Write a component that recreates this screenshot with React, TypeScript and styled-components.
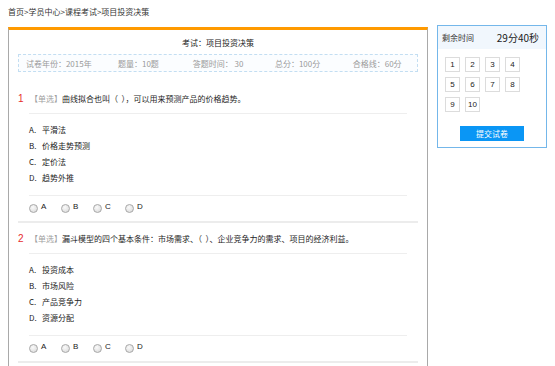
import styled, { createGlobalStyle } from "styled-components";

const GlobalStyle = createGlobalStyle`
  html, body {
    margin: 0;
    padding: 0;
    background: #fff;
    overflow: hidden;
  }
  body {
    font-family: "Noto Sans CJK SC", "Noto Sans", sans-serif;
    font-size: 8px;
    color: #333;
  }
`;

const Page = styled.div`
  padding: 0 8px;
  width: 555px;
  box-sizing: border-box;
`;

const Crumbs = styled.div`
  height: 25px;
  line-height: 24px;
  font-size: 8px;
  color: #333;
`;

const Layout = styled.div`
  display: flex;
  align-items: flex-start;
  gap: 9px;
`;

const Paper = styled.div`
  box-sizing: border-box;
  width: 420px;
  height: 345px;
  margin-top: 2px;
  border: 1px solid #a9a9a9;
  border-top: 3px solid #ff9a00;
  border-bottom: none;
  padding: 0 9px;
  overflow: hidden;
`;

const Title = styled.div`
  padding-top: 6px;
  line-height: 14px;
  text-align: center;
  color: #222;
  font-size: 8px;
`;

const InfoBar = styled.div`
  margin: 4px 0 11px;
  height: 18px;
  border: 1px dashed #c3def2;
  box-sizing: border-box;
  display: grid;
  grid-template-columns: repeat(5, 1fr);
  align-items: center;
  color: #9a9a9a;
  font-size: 8px;
  background: #fbfdff;
  span {
    text-align: center;
  }
`;

const Question = styled.div`
  border-bottom: 2px solid #ececec;
`;

const QHead = styled.div`
  display: flex;
  align-items: center;
  padding: 9px 0 7px;
  line-height: 14px;
  color: #1e1e1e;
`;

const QNum = styled.span`
  width: 12px;
  color: #e62d2d;
  font-size: 10px;
  font-family: "Liberation Sans", sans-serif;
`;

const Tag = styled.span`
  color: #a0a0a0;
`;

const Divider = styled.div`
  height: 1px;
  margin: 0 11px;
  background: #eeeeee;
`;

const Options = styled.div`
  padding: 8px 11px 9px;
`;

const Option = styled.div`
  display: flex;
  line-height: 16px;
  color: #222;
  b {
    font-weight: normal;
    width: 13px;
  }
`;

const Answers = styled.div`
  display: flex;
  padding: 3px 11px 6px;
  line-height: 16px;
`;

const Choice = styled.label`
  display: flex;
  align-items: center;
  width: 32px;
  font-family: "Liberation Sans", sans-serif;
  font-size: 8px;
  color: #222;
`;

const Radio = styled.span`
  width: 7px;
  height: 7px;
  margin: 2px 3px 0 0;
  border-radius: 50%;
  border: 1px solid #a8a8a8;
  background: radial-gradient(circle at 40% 35%, #fafafa, #d6d6d6);
`;

const Side = styled.div`
  box-sizing: border-box;
  width: 110px;
  border: 1px solid #74b7ea;
  padding-bottom: 6px;
`;

const Timer = styled.div`
  display: flex;
  justify-content: space-between;
  align-items: center;
  height: 23px;
  padding: 0 7px 0 4px;
  background: #f1f7fd;
  font-size: 8px;
  strong {
    font-weight: normal;
    font-size: 10px;
    color: #222;
  }
`;

const NumGrid = styled.div`
  display: grid;
  grid-template-columns: repeat(4, 15px);
  gap: 5px;
  padding: 8px 0 0 7px;
`;

const NumBox = styled.span`
  box-sizing: border-box;
  width: 15px;
  height: 15px;
  border: 1px solid #dcdcdc;
  display: flex;
  align-items: center;
  justify-content: center;
  font-family: "Liberation Sans", sans-serif;
  font-size: 8px;
  color: #222;
`;

const Submit = styled.button`
  display: block;
  margin: 14px auto 0;
  width: 64px;
  height: 15px;
  border: none;
  padding: 0;
  background: #0a96f5;
  color: #fff;
  font-family: "Noto Sans CJK SC", sans-serif;
  font-size: 8px;
`;

const questions = [
  {
    text: "曲线拟合也叫（\u00a0\u00a0），可以用来预测产品的价格趋势。",
    options: ["平滑法", "价格走势预测", "定价法", "趋势外推"],
  },
  {
    text: "漏斗模型的四个基本条件：市场需求、（\u00a0\u00a0）、企业竞争力的需求、项目的经济利益。",
    options: ["投资成本", "市场风险", "产品竞争力", "资源分配"],
  },
];

const letters = ["A", "B", "C", "D"];

export default function App() {
  return (
    <Page>
      <GlobalStyle />
      <Crumbs>首页&gt;学员中心&gt;课程考试&gt;项目投资决策</Crumbs>
      <Layout>
        <Paper>
          <Title>考试：项目投资决策</Title>
          <InfoBar>
            <span>试卷年份：2015年</span>
            <span>题量：10题</span>
            <span>答题时间： 30</span>
            <span>总分：100分</span>
            <span>合格线：60分</span>
          </InfoBar>
          {questions.map((q, i) => (
            <Question key={i}>
              <QHead>
                <QNum>{i + 1}</QNum>
                <Tag>【单选】</Tag>
                <span>{q.text}</span>
              </QHead>
              <Divider />
              <Options>
                {q.options.map((o, j) => (
                  <Option key={j}>
                    <b>{letters[j]}.</b>
                    <span>{o}</span>
                  </Option>
                ))}
              </Options>
              <Divider />
              <Answers>
                {letters.map((l) => (
                  <Choice key={l}>
                    <Radio />
                    {l}
                  </Choice>
                ))}
              </Answers>
            </Question>
          ))}
        </Paper>
        <Side>
          <Timer>
            <span>剩余时间</span>
            <strong>29分40秒</strong>
          </Timer>
          <NumGrid>
            {Array.from({ length: 10 }, (_, i) => (
              <NumBox key={i}>{i + 1}</NumBox>
            ))}
          </NumGrid>
          <Submit>提交试卷</Submit>
        </Side>
      </Layout>
    </Page>
  );
}
